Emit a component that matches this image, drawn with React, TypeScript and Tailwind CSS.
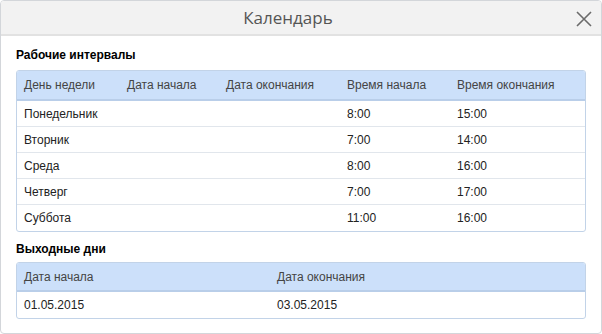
import React from "react";

const rows = [
  ["Понедельник", "", "", "8:00", "15:00"],
  ["Вторник", "", "", "7:00", "14:00"],
  ["Среда", "", "", "8:00", "16:00"],
  ["Четверг", "", "", "7:00", "17:00"],
  ["Суббота", "", "", "11:00", "16:00"],
];

export default function App() {
  return (
    <div className="w-[602px] h-[334px] bg-white" style={{ fontFamily: '"Liberation Sans", Arial, sans-serif' }}>
      <div className="w-[602px] h-[334px] border border-[#d3d6da] rounded-[4px] overflow-hidden flex flex-col">
        <div className="h-[35px] shrink-0 bg-[#f2f2f2] border-b-2 border-[#e2e2e2] relative flex items-center justify-center pr-[26px]">
          <span className="text-[17px] text-[#555] leading-none pb-[1px]" style={{ fontFamily: '"Open Sans", sans-serif' }}>Календарь</span>
          <svg className="absolute right-[8px] top-[9px]" width="18" height="18" viewBox="0 0 18 18">
            <path d="M2 2 L16 16 M16 2 L2 16" stroke="#6b6b6b" strokeWidth="1.6" fill="none" />
          </svg>
        </div>
        <div className="pl-[15px] pr-[15px] flex flex-col text-[12px] text-[#222]">
          <div className="h-[34px] flex items-end pb-[6px] font-bold text-[12px] text-black">Рабочие интервалы</div>
          <div className="border border-[#c2d3e8] rounded-[3px] overflow-hidden">
            <div className="grid grid-cols-[103px_99px_121px_110px_1fr] h-[30px] bg-[#cce0fa] border-b-2 border-[#b9cee9] items-center text-[#444]">
              <div className="pl-[7px]">День недели</div>
              <div className="pl-[7px]">Дата начала</div>
              <div className="pl-[7px]">Дата окончания</div>
              <div className="pl-[7px]">Время начала</div>
              <div className="pl-[7px]">Время окончания</div>
            </div>
            {rows.map((r, i) => (
              <div key={i} className={`grid grid-cols-[103px_99px_121px_110px_1fr] h-[26px] items-center ${i < rows.length - 1 ? "border-b border-[#e1e6ec]" : ""}`}>
                {r.map((c, j) => (
                  <div key={j} className="pl-[7px]">{c}</div>
                ))}
              </div>
            ))}
          </div>
          <div className="h-[30px] flex items-end pb-[4px] font-bold text-[12px] text-black">Выходные дни</div>
          <div className="border border-[#c2d3e8] rounded-[3px] overflow-hidden">
            <div className="grid grid-cols-[253px_1fr] h-[29px] bg-[#cce0fa] border-b-2 border-[#b9cee9] items-center text-[#444]">
              <div className="pl-[7px]">Дата начала</div>
              <div className="pl-[7px]">Дата окончания</div>
            </div>
            <div className="grid grid-cols-[253px_1fr] h-[26px] items-center">
              <div className="pl-[7px]">01.05.2015</div>
              <div className="pl-[7px]">03.05.2015</div>
            </div>
          </div>
        </div>
      </div>
    </div>
  );
}
